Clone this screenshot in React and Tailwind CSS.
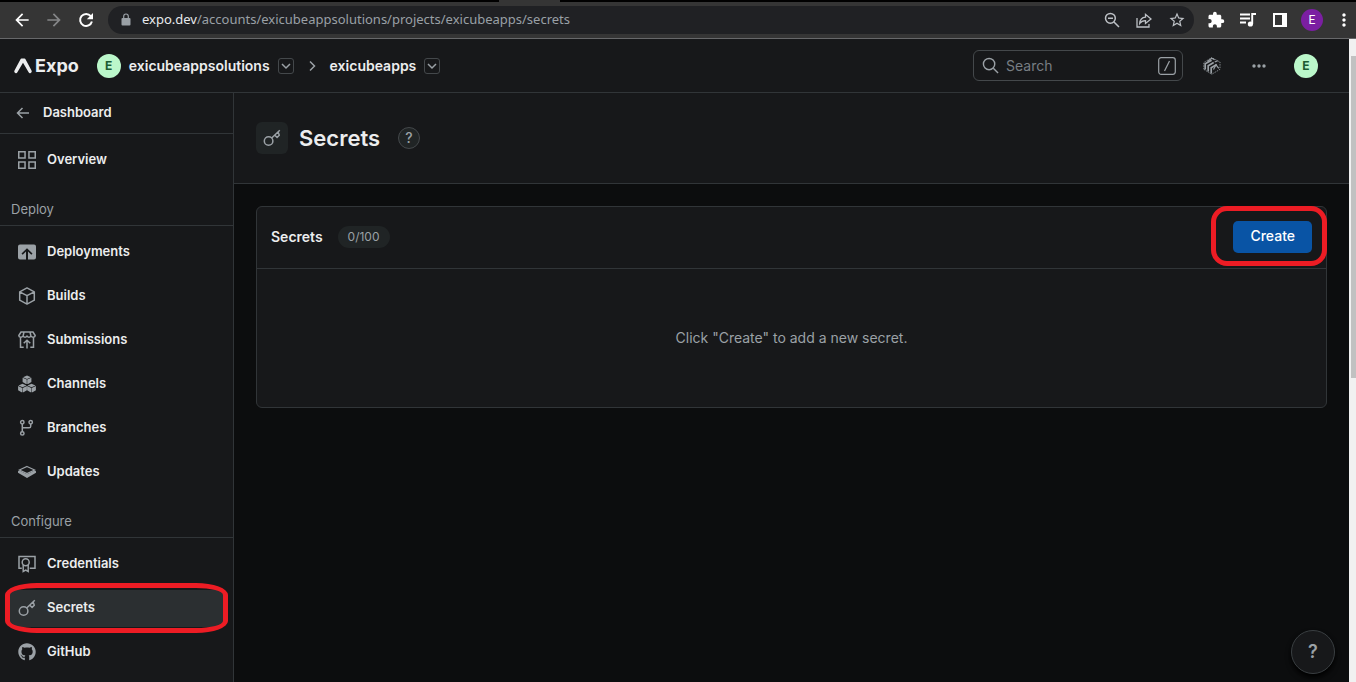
import {
  MdArrowBack,
  MdArrowForward,
  MdStarBorder,
  MdExtension,
  MdMoreVert,
} from "react-icons/md";
import { FaGithub } from "react-icons/fa";

const line = { fill: "none", stroke: "currentColor", strokeWidth: 1.5 };

function Icon({ children, className = "size-[18px]" }) {
  return (
    <svg viewBox="0 0 18 18" className={`shrink-0 ${className}`} aria-hidden="true">
      {children}
    </svg>
  );
}

function KeyIcon() {
  return (
    <Icon>
      <g {...line} strokeWidth="1.5">
        <circle cx="5.6" cy="12" r="4.3" />
        <path d="M8.7 9 16.8 1.2M11.800 6.200l2.300 2.200 2.200-2.100-1.200-3.300" strokeLinejoin="round" />
      </g>
    </Icon>
  );
}

function OverviewIcon() {
  return (
    <Icon>
      <path {...line} d="M.75.75h6.3v6.3H.75zM10.95.75h6.3v6.3h-6.3zM.75 10.95h6.3v6.3H.75zM10.95 10.95h6.3v6.3h-6.3z" />
    </Icon>
  );
}

function DeploymentsIcon() {
  return (
    <Icon>
      <path
        fill="currentColor"
        d="M2 1.5h14a2 2 0 0 1 2 2v11a2 2 0 0 1-2 2h-6V8.600l3.300 3.200 1.200-1.200L9 5.300l-5.500 5.300 1.200 1.200L8 8.600v7.900H2a2 2 0 0 1-2-2v-11a2 2 0 0 1 2-2z"
      />
    </Icon>
  );
}

function BuildsIcon() {
  return (
    <Icon>
      <path {...line} strokeLinejoin="round" d="M9 .9l7.300 3.900v8.400L9 17.100l-7.300-3.900V4.800zM1.700 4.800 9 8.700l7.300-3.900M9 8.700v8.400" />
    </Icon>
  );
}

function SubmissionsIcon() {
  return (
    <Icon>
      <g {...line}>
        <path d="M3 1h12l2.200 3.500c0 2-3.800 2.400-4.200 0-.3 2.400-3.800 2.400-4 0-.2 2.400-3.700 2.400-4 0-.4 2.400-4.200 2-4.200 0zM6 1 5.200 4.500M12 1l.8 3.500" />
        <path d="M2.500 6.500v9.700h3.200M15.500 6.500v9.700h-3.200M9 17.500V9.700M5.700 12.300 9 9.200l3.300 3.100" />
      </g>
    </Icon>
  );
}

function Cube({ x, y }) {
  return (
    <g transform={`translate(${x} ${y})`} fill="currentColor">
      <path d="M0-4.300 4-2.500 0-.7-4-2.500z" />
      <path d="M-4.400-2-.25-.1V4.300h-.8l-3.350-2zM4.400-2 .25-.1V4.300h.8l3.350-2z" />
    </g>
  );
}

function ChannelsIcon() {
  return (
    <Icon>
      <Cube x={9} y={4.700} />
      <Cube x={4.500} y={13} />
      <Cube x={13.500} y={13} />
    </Icon>
  );
}

function BranchesIcon() {
  return (
    <Icon>
      <g {...line} strokeWidth="1.500">
        <circle cx="4.300" cy="3.300" r="1.700" />
        <circle cx="12.700" cy="3.300" r="1.700" />
        <circle cx="4.300" cy="14.400" r="1.700" />
        <path d="M4.300 5v7.700M12.700 5v2.200c0 1-.6 1.600-1.600 1.600H4.300" />
      </g>
    </Icon>
  );
}

function UpdatesIcon() {
  return (
    <Icon>
      <path {...line} strokeWidth="1.200" d="M9 3.500 16.600 7 9 10.600 1.400 7z" />
      <path fill="currentColor" d="M0 8.300 1.500 7.600 9 11.300l7.500-3.700 1.500.7v1.400L9 15 0 9.700z" />
    </Icon>
  );
}

function CredentialsIcon() {
  return (
    <Icon>
      <g {...line} strokeWidth="1.500">
        <path d="M3.800 13.300H1V1.500h16v11.800h-5.300" />
        <circle cx="7.700" cy="7.200" r="3.500" />
        <path d="M5.200 10v6.500l2.500-1.300 2.500 1.300V10" />
      </g>
    </Icon>
  );
}

function OrbitIcon() {
  return (
    <Icon>
      <g fill="none" stroke="currentColor">
        <path strokeWidth="1.700" d="M2.200 12.500V6.800L8.600 3.300M5.200 14.500V8.700l5.500-3.200M8.200 16.500v-5.700l5.500-3.300" />
        <path strokeWidth="1.200" d="M4.500 4.500 8.700 1.200l3 1.500M11.700 5l3-1.200M10.500 12.500l2.500-4.700 2.800 3.500" />
        <path strokeWidth=".8" strokeDasharray="1.500 1" d="M.8 12.300V5.500L8.700.7 17 5v7.300l-8.300 5z" />
      </g>
    </Icon>
  );
}

function Chevron({ right }) {
  return (
    <svg viewBox="0 0 12 12" className="size-3" aria-hidden="true">
      <path {...line} d={right ? "M4 1.500 8.500 6 4 10.500" : "M2 4l4 4 4-4"} />
    </svg>
  );
}

function ToolbarButton({ label, children }) {
  return (
    <button aria-label={label} className="flex w-8 items-center justify-center">{children}</button>
  );
}

function BrowserBar() {
  return (
    <div className="shrink-0 border-b border-[#67686a] bg-[#353535]">
      <div className="flex h-[2px] bg-black">
        <div className="ml-[499px] w-[61px] bg-[#353535]" />
      </div>
      <div className="flex h-9 items-center pr-[2px] pl-3 text-[#e8eaed]">
        <button aria-label="Back" className="mr-3 text-white"><MdArrowBack size={20} /></button>
        <button aria-label="Forward" className="mr-3 text-[#858688]"><MdArrowForward size={20} /></button>
        <button aria-label="Reload" className="mr-3 text-white">
          <svg viewBox="0 0 20 20" className="size-5" aria-hidden="true">
            <path d="M14.800 6.200A6 6 0 1 0 15.900 11.500" fill="none" stroke="currentColor" strokeWidth="2" />
            <path d="M17 3v6.200h-6.200z" fill="currentColor" />
          </svg>
        </button>
        <div className="flex h-7 min-w-0 flex-1 items-center rounded-full bg-[#202124] pr-2 pl-3 text-[#bdc1c6]">
          <svg viewBox="0 0 12 14" className="mr-2.5 h-3.5 w-3 shrink-0 text-[#9aa0a6]" aria-hidden="true">
            <rect x="1.500" y="5" width="9" height="7.500" rx="1" fill="currentColor" />
            <path d="M3.700 5V3.300a2.300 2.300 0 0 1 4.600 0V5" fill="none" stroke="currentColor" strokeWidth="1.200" />
          </svg>
          <div className="min-w-0 flex-1 truncate font-['Noto_Sans',sans-serif] text-[13px] text-[#9aa0a6]">
            <span className="text-[#e8eaed]">expo.dev</span>/accounts/exicubeappsolutions/projects/exicubeapps/secrets
          </div>
          <div className="flex items-center gap-4">
            <button aria-label="Zoom">
              <svg viewBox="0 0 16 16" className="size-4" aria-hidden="true">
                <path {...line} d="M10 10l5 5M4 6.300h5" />
                <circle {...line} cx="6.400" cy="6.300" r="4.900" />
              </svg>
            </button>
            <button aria-label="Share">
              <svg viewBox="0 0 16 16" className="size-4" aria-hidden="true">
                <path {...line} strokeWidth="1.300" d="M1 6v9h12v-3M3.700 11.500C4 7.500 6 5.500 9.500 5.200V2.300L15 7l-5.500 4.500V8.700c-2.700 0-4.500.9-5.800 2.800z" />
              </svg>
            </button>
            <button aria-label="Bookmark"><MdStarBorder size={18} /></button>
          </div>
        </div>
        <div className="ml-1.5 flex items-center text-white">
          <ToolbarButton label="Extensions"><MdExtension size={18} /></ToolbarButton>
          <ToolbarButton label="Media">
            <svg viewBox="0 0 18 18" className="size-[18px]" aria-hidden="true">
              <path d="M1 3.500h10M1 7.500h10M1 11.500h6M13.200 13V3h3.800" fill="none" stroke="currentColor" strokeWidth="1.900" />
              <circle cx="11.400" cy="13" r="2.600" fill="currentColor" />
            </svg>
          </ToolbarButton>
          <ToolbarButton label="Side panel">
            <svg viewBox="0 0 14 14" className="size-[14px]" aria-hidden="true">
              <path fill="currentColor" fillRule="evenodd" d="M0 0h14v14H0zM2 2v10h7V2z" />
            </svg>
          </ToolbarButton>
          <ToolbarButton label="Profile">
            <span className="size-[22px] rounded-full bg-[#7b1fa2] text-center font-['Roboto',sans-serif] text-xs leading-[22px] text-white">E</span>
          </ToolbarButton>
          <button aria-label="Menu" className="ml-1.5"><MdMoreVert size={20} /></button>
        </div>
      </div>
    </div>
  );
}

function Avatar() {
  return (
    <span className="flex size-6 items-center justify-center rounded-full bg-[#bbf7ca] text-xs font-bold text-[#1d5c33]">E</span>
  );
}

function Switcher({ label }) {
  return (
    <button aria-label={label} className="flex size-4 items-center justify-center rounded-[3px] border border-[#44484b] text-[#9ba1a6]">
      <Chevron />
    </button>
  );
}

function Header() {
  return (
    <header className="flex h-[54px] shrink-0 items-center border-b border-[#313538] bg-[#17181a] pr-[31px] pl-3.5">
      <a href="#" className="flex items-center gap-[3px] text-lg font-bold">
        <svg viewBox="0 0 18 16" className="h-4 w-[18px]" aria-hidden="true">
          <path fill="currentColor" d="M7.500.500h3c.5 0 .8.300 1 .8l6 11.200c.5 1.100.2 1.800-.8 2.400-.9.500-1.600.2-2.100-.7L9 4.700 3.400 14.200c-.5.900-1.200 1.200-2.100.7-1-.6-1.300-1.300-.8-2.400l6-11.200c.2-.5.500-.8 1-.8z" />
        </svg>
        Expo
      </a>
      <div className="ml-[18px] flex items-center text-sm font-semibold">
        <Avatar />
        <a href="#" className="mr-2 ml-2">exicubeappsolutions</a>
        <Switcher label="Switch account" />
        <span className="mx-3 text-[#9ba1a6]"><Chevron right /></span>
        <a href="#" className="mr-2">exicubeapps</a>
        <Switcher label="Switch project" />
      </div>
      <label className="ml-auto flex h-[31px] w-[210px] items-center rounded-md border border-[#44484b] px-2 text-[#9ba1a6]">
        <Icon className="mr-[7px] size-[17px]">
          <circle {...line} cx="7.500" cy="7.500" r="6" />
          <path {...line} d="M12 12l5 5" />
        </Icon>
        <input aria-label="Search" placeholder="Search" className="min-w-0 flex-1 text-sm outline-none placeholder:text-[#777e84]" />
        <svg viewBox="0 0 18 18" className="-mr-0.5 size-[18px]" aria-hidden="true">
          <rect x=".7" y=".7" width="16.600" height="16.600" rx="2.500" {...line} strokeWidth="1.200" />
          <path {...line} strokeWidth="1.200" d="M6.500 14l5-10" />
        </svg>
      </label>
      <button aria-label="Orbit" className="ml-5 text-[#9ba1a6]"><OrbitIcon /></button>
      <button aria-label="More" className="mr-7 ml-[31px] text-[#9ba1a6]">
        <svg viewBox="0 0 14 6" className="h-1.5 w-3.5" fill="currentColor" aria-hidden="true">
          <circle cx="2" cy="3" r="1.700" /><circle cx="7" cy="3" r="1.700" /><circle cx="12" cy="3" r="1.700" />
        </svg>
      </button>
      <button aria-label="Account"><Avatar /></button>
    </header>
  );
}

function NavItem({ icon, label, active }) {
  return (
    <li className="relative flex h-11 items-center px-2">
      <a
        href="#"
        aria-current={active ? "page" : undefined}
        className={`flex h-[37px] flex-1 items-center gap-[11px] rounded-md px-2.5 text-[13px] font-semibold ${active ? "bg-[#2b2f31]" : ""}`}
      >
        <span className="text-[#9ba1a6]">{icon}</span>
        {label}
      </a>
      {active && (
        <span className="pointer-events-none absolute -inset-y-[3px] right-[5px] left-[5px] rounded-[32px/12px] border-5 border-[#ed1c24]" />
      )}
    </li>
  );
}

function NavTitle({ children }) {
  return (
    <h2 className="flex h-11 items-end border-b border-[#313538] px-[11px] pb-2 text-[13px] leading-4 text-[#9ba1a6]">{children}</h2>
  );
}

function Sidebar() {
  return (
    <nav className="w-[234px] shrink-0 border-r border-[#313538] bg-[#17181a] text-[#ecedee]">
      <a href="#" className="flex h-[41px] items-center gap-3 border-b border-[#313538] px-[15px] text-[13px] font-semibold">
        <svg viewBox="0 0 16 16" className="size-4 text-[#9ba1a6]" aria-hidden="true">
          <path {...line} d="M14 8H2.500M7.500 3 2.500 8l5 5" />
        </svg>
        Dashboard
      </a>
      <ul className="pt-1">
        <NavItem icon={<OverviewIcon />} label="Overview" />
      </ul>
      <NavTitle>Deploy</NavTitle>
      <ul className="pt-1">
        <NavItem icon={<DeploymentsIcon />} label="Deployments" />
        <NavItem icon={<BuildsIcon />} label="Builds" />
        <NavItem icon={<SubmissionsIcon />} label="Submissions" />
        <NavItem icon={<ChannelsIcon />} label="Channels" />
        <NavItem icon={<BranchesIcon />} label="Branches" />
        <NavItem icon={<UpdatesIcon />} label="Updates" />
      </ul>
      <NavTitle>Configure</NavTitle>
      <ul className="pt-1">
        <NavItem icon={<CredentialsIcon />} label="Credentials" />
        <NavItem icon={<KeyIcon />} label="Secrets" active />
        <NavItem icon={<FaGithub size={18} />} label="GitHub" />
      </ul>
    </nav>
  );
}

function Main() {
  return (
    <main className="relative min-w-0 flex-1 bg-[#0c0d0e]">
      <div className="flex h-[91px] items-center border-b border-[#313538] bg-[#17181a] px-[22px]">
        <span className="flex size-8 items-center justify-center rounded-md bg-[#202425] text-[#9ba1a6]"><KeyIcon /></span>
        <h1 className="mr-[18px] ml-[11px] text-[22px] font-semibold">Secrets</h1>
        <button aria-label="About secrets" className="size-[22px] rounded-full border border-[#44484b] bg-[#202425] text-sm leading-5 font-medium text-[#9ba1a6]">?</button>
      </div>
      <section className="mx-[22px] mt-[22px] rounded-md border border-[#313538] bg-[#17181a]">
        <div className="flex h-[62px] items-center border-b border-[#313538] px-3.5 pb-0.5">
          <h2 className="mr-[15px] text-sm font-semibold">Secrets</h2>
          <span className="rounded-full bg-[#202425] px-2.5 text-xs leading-[22px] text-[#9ba1a6]">0/100</span>
          <span className="relative ml-auto">
            <button className="block h-8 rounded-[5px] bg-[#0954a5] px-[17px] pb-0.5 text-sm font-medium text-white">Create</button>
            <span className="pointer-events-none absolute -top-[15px] -right-[15px] -bottom-[13px] -left-[22px] rounded-[16px] border-5 border-[#ed1c24]" />
          </span>
        </div>
        <p className="py-[57px] text-center text-sm leading-6 text-[#9ba1a6]">Click "Create" to add a new secret.</p>
      </section>
      <button aria-label="Help" className="absolute right-3.5 bottom-2 size-11 rounded-full border border-[#3a3f42] bg-[#17181a] text-lg font-semibold text-[#9ba1a6] shadow-md shadow-black">?</button>
    </main>
  );
}

function Scrollbar() {
  return (
    <div className="flex w-[7px] shrink-0 flex-col bg-[#f1f1f1] pl-[2px]">
      <div className="h-[17px]" />
      <div className="h-1/2 bg-[#c1c1c1]" />
    </div>
  );
}

export default function App() {
  return (
    <div className="flex h-screen flex-col overflow-hidden bg-[#0c0d0e] font-['Inter',sans-serif] text-[#ecedee]">
      <BrowserBar />
      <div className="flex min-h-0 flex-1">
        <div className="flex min-w-0 flex-1 flex-col">
          <Header />
          <div className="flex min-h-0 flex-1">
            <Sidebar />
            <Main />
          </div>
        </div>
        <Scrollbar />
      </div>
    </div>
  );
}
